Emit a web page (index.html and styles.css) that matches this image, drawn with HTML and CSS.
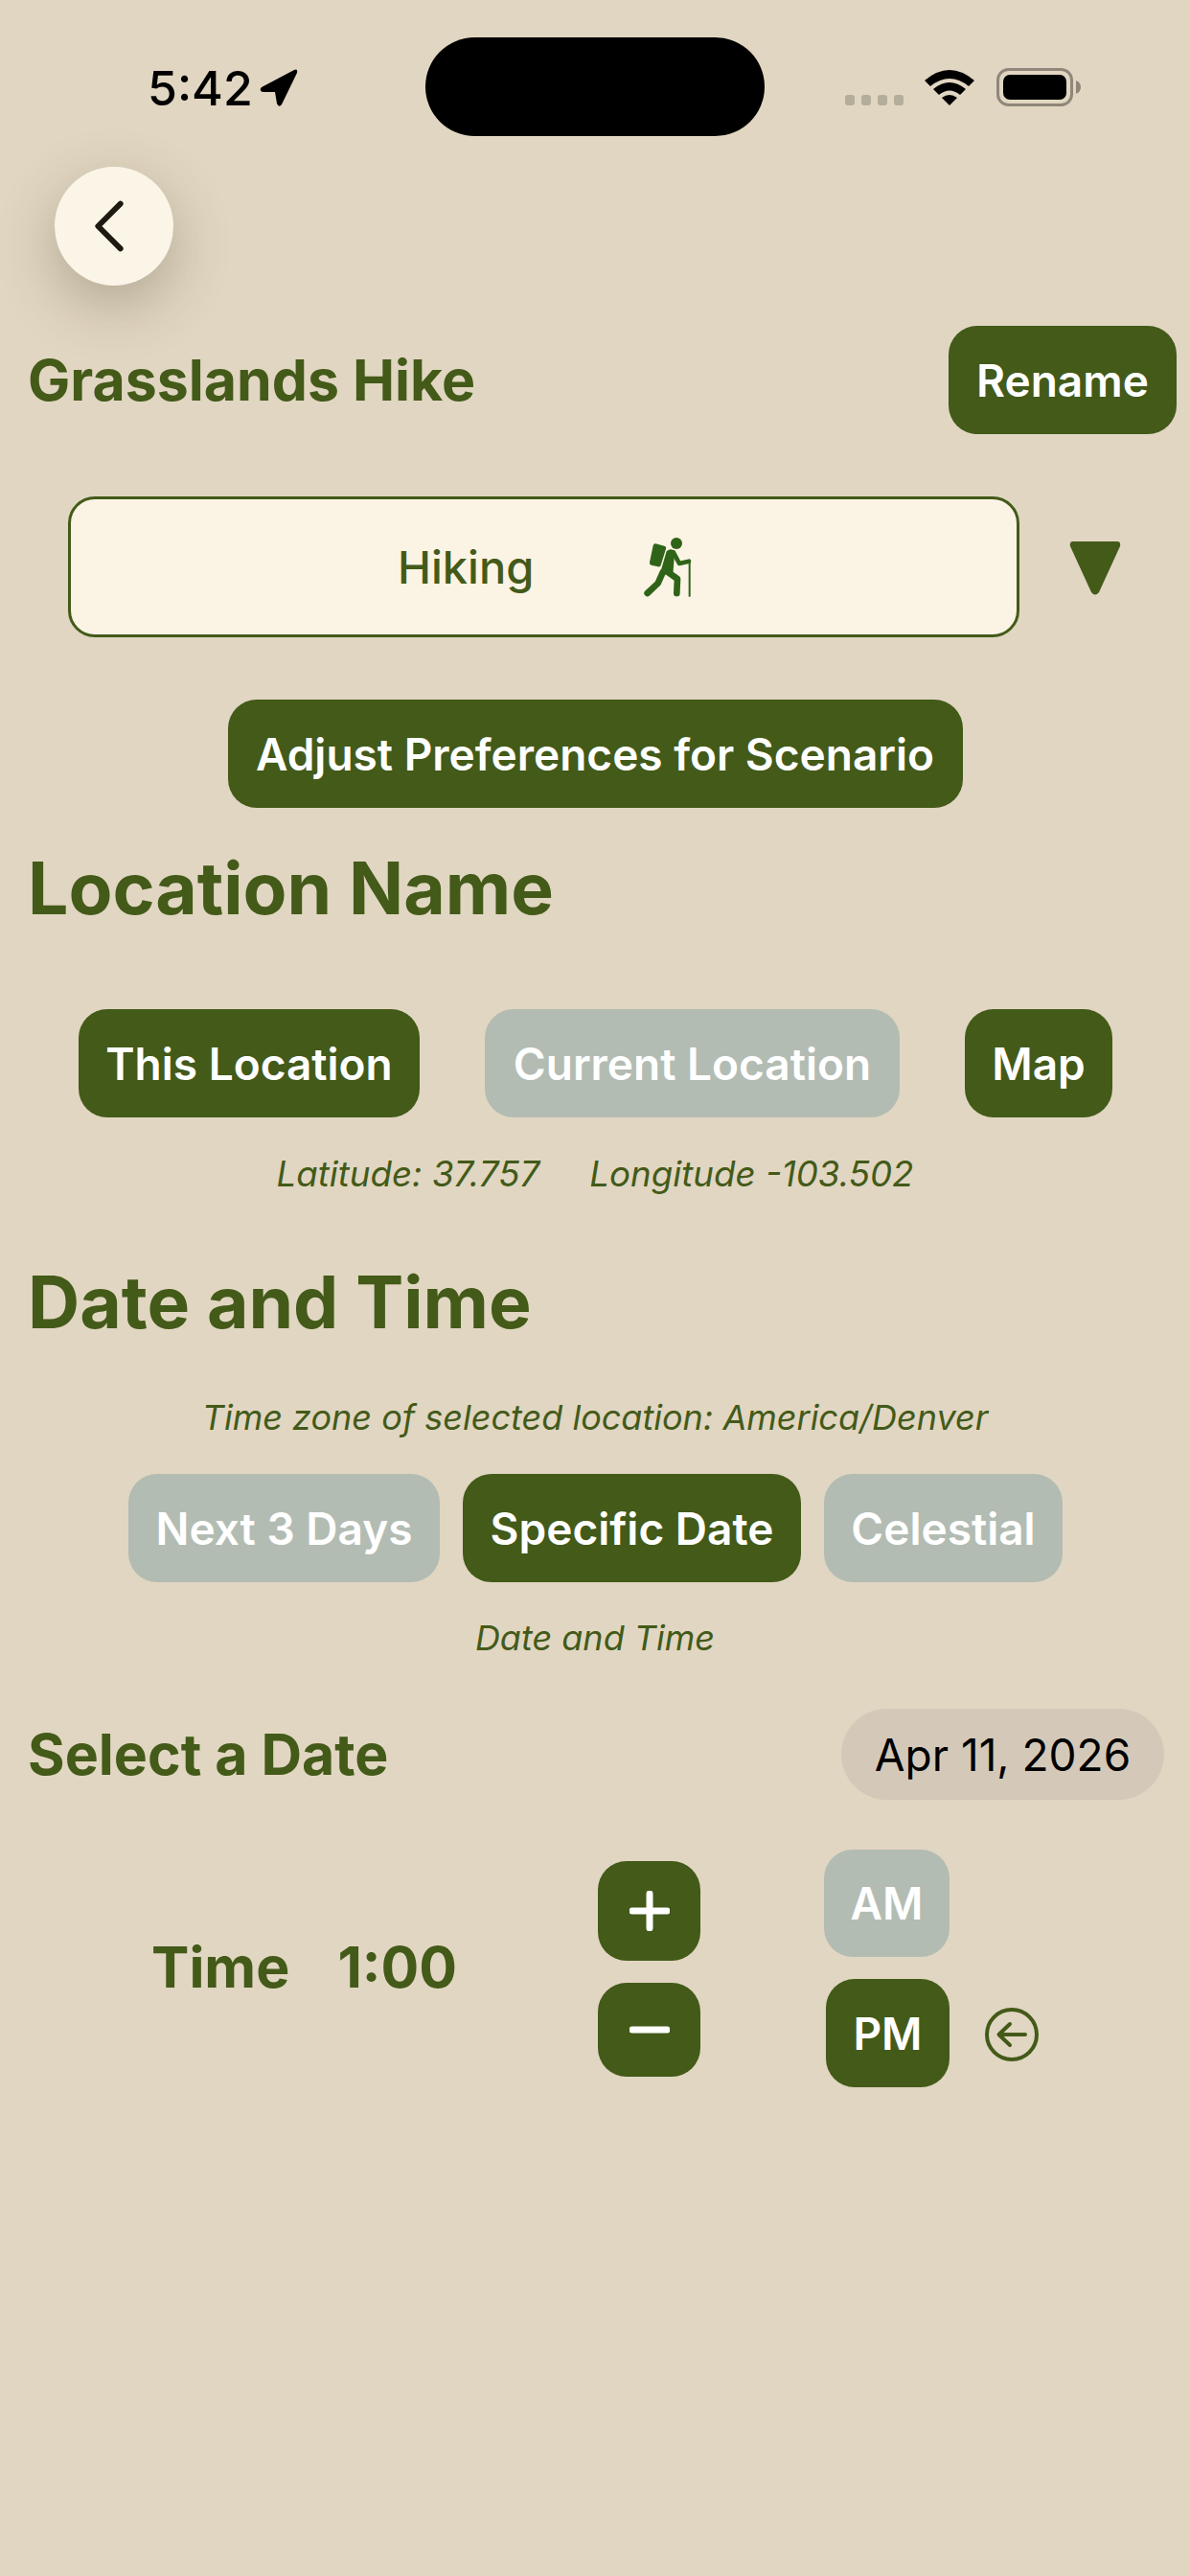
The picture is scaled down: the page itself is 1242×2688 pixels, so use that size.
FILE: index.html
```html
<!DOCTYPE html>
<html lang="en">
<head>
  <meta charset="UTF-8">
  <title>Grasslands Hike</title>
  <link rel="stylesheet" href="styles.css">
</head>
<body>
  <div class="status-bar">
    <div class="status-left">
      <span class="clock">5:42</span>
      <svg class="location-arrow" viewBox="0 0 40 40"><path d="M2 19 L36 1 Q40 -1 39 4 L23 37 Q20 41 18 36 L16 24 L3 24 Q-1 22 2 19 Z"/></svg>
    </div>
    <div class="island"></div>
    <div class="status-right">
      <div class="signal"><i></i><i></i><i></i><i></i></div>
      <svg class="wifi" viewBox="0 0 54 40">
        <path d="M1 13 Q27 -9 53 13 L47 19 Q27 3 7 19 Z"/>
        <path d="M10 22 Q27 8 44 22 L38 28 Q27 19 16 28 Z"/>
        <path d="M19 31 Q27 25 35 31 L27 39 Z"/>
      </svg>
      <svg class="battery" viewBox="0 0 88 40">
        <rect x="1.500" y="1.500" width="77" height="37" rx="11" fill="none" stroke="#8f8779" stroke-width="3"/>
        <rect x="7" y="7" width="66" height="26" rx="7" fill="#000"/>
        <path d="M83 13 Q88 15 88 20 Q88 25 83 27 Z" fill="#8f8779"/>
      </svg>
    </div>
  </div>

  <button class="back-btn">
    <svg viewBox="0 0 40 60" width="36" height="54"><path d="M33 4 L7 30 L33 56" fill="none" stroke="#1e1a12" stroke-width="6.500" stroke-linecap="round" stroke-linejoin="round"/></svg>
  </button>

  <div class="title-row">
    <h2 class="trip-name">Grasslands Hike</h2>
    <button class="btn rename">Rename</button>
  </div>

  <div class="scenario-row">
    <div class="scenario-box">
      <span class="scenario-name">Hiking</span>
      <svg class="hiker" viewBox="150 120 156 192" fill="#2f6418">
        <circle cx="255" cy="141" r="18"/>
        <path d="M190 142 L217 149 Q224 151 222 158 L206 209 Q204 216 197 214 L176 209 Q170 207 171 200 L182 148 Q184 141 190 142 Z"/>
        <path d="M224 166 Q236 154 250 164 L244 238 L203 238 Z"/>
        <path d="M224 228 L258 252 L256 297 M212 232 L197 266 L164 297" fill="none" stroke="#2f6418" stroke-width="20" stroke-linecap="round" stroke-linejoin="round"/>
        <path d="M246 170 L264 204 L294 197" fill="none" stroke="#2f6418" stroke-width="14" stroke-linecap="round" stroke-linejoin="round"/>
        <rect x="293" y="198" width="6" height="110"/>
      </svg>
    </div>
    <svg class="caret" viewBox="0 0 54 56"><path d="M4 0 L50 0 Q54 0 53 5 L31 53 Q27 58 23 53 L1 5 Q0 0 4 0 Z" fill="#435a19"/></svg>
  </div>

  <div class="center-row adjust-row">
    <button class="btn adjust">Adjust Preferences for Scenario</button>
  </div>

  <h1 class="section-title location-title">Location Name</h1>

  <div class="location-buttons">
    <button class="btn this-loc">This Location</button>
    <button class="btn off current-loc">Current Location</button>
    <button class="btn map">Map</button>
  </div>
  <div class="note coords"><span>Latitude: 37.757</span><span>Longitude -103.502</span></div>

  <h1 class="section-title date-title">Date and Time</h1>
  <div class="note tz">Time zone of selected location: America/Denver</div>

  <div class="date-tabs">
    <button class="btn off next-days">Next 3 Days</button>
    <button class="btn specific">Specific Date</button>
    <button class="btn off celestial">Celestial</button>
  </div>
  <div class="note mode">Date and Time</div>

  <div class="select-row">
    <h2 class="select-label">Select a Date</h2>
    <div class="date-pill">Apr 11, 2026</div>
  </div>

  <div class="time-row">
    <div class="time-value"><span>Time</span><span>1:00</span></div>
    <div class="stepper">
      <button class="step plus"><svg viewBox="0 0 42 42" width="42" height="42"><path d="M21 3 V39 M3 21 H39" stroke="#fff" stroke-width="7" stroke-linecap="round"/></svg></button>
      <button class="step minus"><svg viewBox="0 0 42 10" width="42" height="10"><path d="M3 5 H39" stroke="#fff" stroke-width="7" stroke-linecap="round"/></svg></button>
    </div>
    <div class="ampm">
      <button class="btn off am">AM</button>
      <div class="pm-line">
        <button class="btn pm">PM</button>
        <svg class="undo" viewBox="0 0 56 56"><circle cx="28" cy="28" r="26" fill="none" stroke="#435a19" stroke-width="4"/><path d="M42 28 H15 M26 17 L14.500 28 L26 39" fill="none" stroke="#435a19" stroke-width="4" stroke-linecap="round" stroke-linejoin="round"/></svg>
      </div>
    </div>
  </div>
</body>
</html>
```

FILE: styles.css
```css
* {
  box-sizing: border-box;
}

body {
  margin: 0;
  width: 1242px;
  height: 2688px;
  overflow: hidden;
  background-color: #e1d6c1;
  color: #435a19;
  font-family: 'Inter', sans-serif;
}

h1, h2 {
  margin: 0;
}

button {
  border: none;
  padding: 0;
  font-family: inherit;
}

.status-bar {
  height: 174px;
  padding-top: 39px;
  display: flex;
  align-items: flex-start;
}

.status-left {
  width: 444px;
  height: 103px;
  padding-left: 154px;
  padding-top: 3px;
  display: flex;
  align-items: center;
  gap: 7px;
  color: #000;
}

.clock {
  font-size: 50px;
  font-weight: 500;
}

.location-arrow {
  width: 40px;
  height: 40px;
}

.island {
  width: 354px;
  height: 103px;
  border-radius: 52px;
  background: #000;
}

.status-right {
  height: 103px;
  display: flex;
  align-items: center;
  padding-left: 84px;
}

.signal {
  display: flex;
  gap: 7px;
  margin-top: 28px;
  margin-right: 21px;
}

.signal i {
  width: 10px;
  height: 11px;
  border-radius: 3px;
  background: #b5ad9c;
}

.wifi {
  width: 54px;
  height: 40px;
  margin-right: 22px;
}

.battery {
  width: 88px;
  height: 40px;
}

.back-btn {
  display: flex;
  align-items: center;
  justify-content: center;
  width: 124px;
  height: 124px;
  margin-left: 57px;
  padding-right: 10px;
  border-radius: 50%;
  background: #fbf5e8;
  box-shadow: 0 20px 60px rgba(70, 60, 40, 0.3);
}

.btn {
  height: 113px;
  border-radius: 30px;
  background: #435a19;
  color: #fff;
  font-size: 46px;
  font-weight: 600;
}

.btn.off {
  background: #b3bcb3;
}

.title-row {
  margin-top: 42px;
  padding: 0 14px 0 29px;
  display: flex;
  align-items: center;
  justify-content: space-between;
}

.trip-name {
  font-size: 59px;
  font-weight: 700;
}

.rename {
  width: 238px;
}

.scenario-row {
  margin-top: 65px;
  padding-left: 71px;
  display: flex;
  align-items: center;
}

.scenario-box {
  width: 993px;
  height: 147px;
  padding-left: 341px;
  display: flex;
  align-items: center;
  border: 3px solid #435a19;
  border-radius: 28px;
  background: #fbf3e4;
}

.scenario-name {
  font-size: 47px;
  font-weight: 500;
}

.hiker {
  width: 52px;
  height: 64px;
  margin-left: 114px;
}

.caret {
  width: 54px;
  height: 56px;
  margin-left: 52px;
  margin-top: 2px;
}

.center-row {
  display: flex;
  justify-content: center;
}

.adjust-row {
  margin-top: 65px;
}

.adjust {
  width: 767px;
}

.section-title {
  height: 90px;
  padding-left: 29px;
  font-size: 75px;
  font-weight: 700;
  line-height: 90px;
}

.location-title {
  margin-top: 39px;
}

.location-buttons {
  margin-top: 81px;
  padding-left: 82px;
  display: flex;
  gap: 68px;
}

.this-loc {
  width: 356px;
}

.current-loc {
  width: 433px;
}

.map {
  width: 154px;
}

.note {
  height: 50px;
  line-height: 50px;
  font-size: 36px;
  font-style: italic;
  text-align: center;
}

.coords {
  margin-top: 34px;
  display: flex;
  justify-content: center;
  gap: 52px;
  font-size: 36.700px;
}

.date-title {
  margin-top: 64px;
}

.tz {
  margin-top: 50px;
}

.date-tabs {
  margin-top: 34px;
  padding-left: 134px;
  display: flex;
  gap: 24px;
}

.next-days {
  width: 325px;
}

.specific {
  width: 353px;
}

.celestial {
  width: 249px;
}

.mode {
  margin-top: 33px;
}

.select-row {
  margin-top: 49px;
  padding: 0 27px 0 29px;
  display: flex;
  align-items: center;
  justify-content: space-between;
}

.select-label {
  font-size: 59px;
  font-weight: 700;
}

.date-pill {
  width: 337px;
  height: 95px;
  display: flex;
  align-items: center;
  justify-content: center;
  border-radius: 48px;
  background: #d4c9b9;
  color: #000;
  font-size: 46px;
}

.time-row {
  margin-top: 52px;
  display: flex;
  align-items: flex-start;
}

.time-value {
  width: 466px;
  margin-left: 158px;
  margin-top: 83px;
  display: flex;
  gap: 50px;
  font-size: 59px;
  font-weight: 700;
  line-height: 80px;
}

.stepper {
  width: 236px;
  margin-top: 12px;
}

.step {
  display: flex;
  align-items: center;
  justify-content: center;
  width: 107px;
  background: #435a19;
  border-radius: 30px;
}

.plus {
  height: 104px;
}

.minus {
  height: 98px;
  margin-top: 23px;
}

.am {
  width: 131px;
  height: 112px;
  display: block;
}

.pm-line {
  margin-top: 23px;
  padding-left: 2px;
  display: flex;
  align-items: center;
  gap: 37px;
}

.pm {
  width: 129px;
}

.undo {
  width: 56px;
  height: 56px;
  margin-top: 2px;
}
```
